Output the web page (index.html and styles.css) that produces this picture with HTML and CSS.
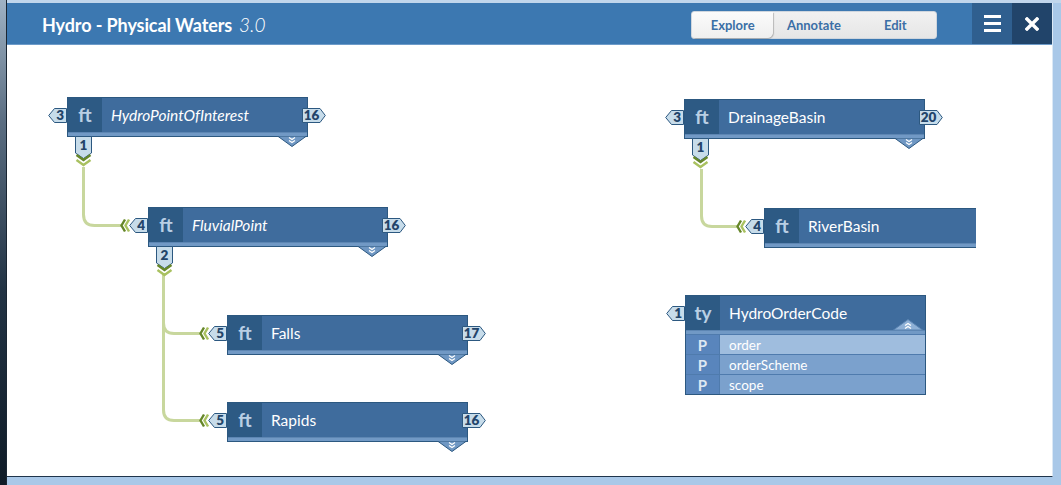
FILE: index.html
```html
<!DOCTYPE html>
<html>
<head>
<meta charset="utf-8">
<title>Hydro - Physical Waters</title>
<link rel="stylesheet" href="styles.css">
</head>
<body>
<div class="screen">
  <div class="frame-left"></div>
  <div class="window">
    <header class="titlebar">
      <div class="title"><span class="title-main">Hydro - Physical Waters</span><span class="title-ver">3.0</span></div>
      <div class="spacer"></div>
      <nav class="tabs">
        <span class="tab active">Explore</span>
        <span class="tab">Annotate</span>
        <span class="tab">Edit</span>
      </nav>
      <button class="hbtn menu-btn" aria-label="menu"><span class="bars"><i></i><i></i><i></i></span></button>
      <button class="hbtn close-btn" aria-label="close">
        <svg width="14" height="14" viewBox="0 0 14 14"><path d="M2 2 L12 12 M12 2 L2 12" stroke="#fff" stroke-width="3.4" stroke-linecap="square"/></svg>
      </button>
    </header>

    <main class="canvas">
      <svg class="links" width="969" height="431" viewBox="0 0 969 431">
        <path d="M76.5 122 V169.5 Q76.5 180.5 87.5 180.5 H115"/>
        <path d="M156.5 228 V278 Q156.5 288.5 167 288.5 H194"/>
        <path d="M156.5 228 V365 Q156.5 375.5 167 375.5 H194"/>
        <path d="M694.5 124 V171 Q694.5 181.5 705 181.5 H732"/>
      </svg>

      <!-- HydroPointOfInterest -->
      <div class="node n-hpoi">
        <div class="head"><span class="kind">ft</span><span class="name it">HydroPointOfInterest</span></div>
        <div class="strip"></div>
        <div class="port port-in"><svg viewBox="0 0 19 15"><polygon points="0.7,7.5 6.5,0.5 18.5,0.5 18.5,14.5 6.5,14.5"/></svg><span>3</span></div>
        <div class="port port-out"><svg viewBox="0 0 24 15"><polygon points="0.5,0.5 18,0.5 23.3,7.5 18,14.5 0.5,14.5"/></svg><span>16</span></div>
        <div class="port port-down"><svg viewBox="0 0 17 31"><polygon points="0.5,0.5 16.5,0.5 16.5,17 8.5,22.5 0.5,17"/><polyline class="chev-d" points="1.5,19 8.5,24 15.5,19"/><polyline class="chev-l" points="1.5,24 8.5,29 15.5,24"/></svg><span>1</span></div>
        <svg class="expand" viewBox="0 0 30 11"><polygon points="0.5,0 29.5,0 15,10.5"/><polyline points="12,1.5 15,3.5 18,1.5"/><polyline points="12,4.5 15,6.5 18,4.5"/></svg>
      </div>

      <!-- FluvialPoint -->
      <div class="node n-fluvial">
        <div class="head"><span class="kind">ft</span><span class="name it">FluvialPoint</span></div>
        <div class="strip"></div>
        <svg class="chevs" viewBox="0 0 10 15"><polyline class="chev-d" points="5,1.5 1.5,7.5 5,13.5"/><polyline class="chev-l" points="9,1.5 5.5,7.5 9,13.5"/></svg>
        <div class="port port-in"><svg viewBox="0 0 19 15"><polygon points="0.7,7.5 6.5,0.5 18.5,0.5 18.5,14.5 6.5,14.5"/></svg><span>4</span></div>
        <div class="port port-out"><svg viewBox="0 0 24 15"><polygon points="0.5,0.5 18,0.5 23.3,7.5 18,14.5 0.5,14.5"/></svg><span>16</span></div>
        <div class="port port-down"><svg viewBox="0 0 17 31"><polygon points="0.5,0.5 16.5,0.5 16.5,17 8.5,22.5 0.5,17"/><polyline class="chev-d" points="1.5,19 8.5,24 15.5,19"/><polyline class="chev-l" points="1.5,24 8.5,29 15.5,24"/></svg><span>2</span></div>
        <svg class="expand" viewBox="0 0 30 11"><polygon points="0.5,0 29.5,0 15,10.5"/><polyline points="12,1.5 15,3.5 18,1.5"/><polyline points="12,4.5 15,6.5 18,4.5"/></svg>
      </div>

      <!-- Falls -->
      <div class="node n-falls">
        <div class="head"><span class="kind">ft</span><span class="name">Falls</span></div>
        <div class="strip"></div>
        <svg class="chevs" viewBox="0 0 10 15"><polyline class="chev-d" points="5,1.5 1.5,7.5 5,13.5"/><polyline class="chev-l" points="9,1.5 5.5,7.5 9,13.5"/></svg>
        <div class="port port-in"><svg viewBox="0 0 19 15"><polygon points="0.7,7.5 6.5,0.5 18.5,0.5 18.5,14.5 6.5,14.5"/></svg><span>5</span></div>
        <div class="port port-out"><svg viewBox="0 0 24 15"><polygon points="0.5,0.5 18,0.5 23.3,7.5 18,14.5 0.5,14.5"/></svg><span>17</span></div>
        <svg class="expand" viewBox="0 0 30 11"><polygon points="0.5,0 29.5,0 15,10.5"/><polyline points="12,1.5 15,3.5 18,1.5"/><polyline points="12,4.5 15,6.5 18,4.5"/></svg>
      </div>

      <!-- Rapids -->
      <div class="node n-rapids">
        <div class="head"><span class="kind">ft</span><span class="name">Rapids</span></div>
        <div class="strip"></div>
        <svg class="chevs" viewBox="0 0 10 15"><polyline class="chev-d" points="5,1.5 1.5,7.5 5,13.5"/><polyline class="chev-l" points="9,1.5 5.5,7.5 9,13.5"/></svg>
        <div class="port port-in"><svg viewBox="0 0 19 15"><polygon points="0.7,7.5 6.5,0.5 18.5,0.5 18.5,14.5 6.5,14.5"/></svg><span>5</span></div>
        <div class="port port-out"><svg viewBox="0 0 24 15"><polygon points="0.5,0.5 18,0.5 23.3,7.5 18,14.5 0.5,14.5"/></svg><span>16</span></div>
        <svg class="expand" viewBox="0 0 30 11"><polygon points="0.5,0 29.5,0 15,10.5"/><polyline points="12,1.5 15,3.5 18,1.5"/><polyline points="12,4.5 15,6.5 18,4.5"/></svg>
      </div>

      <!-- DrainageBasin -->
      <div class="node n-drainage">
        <div class="head"><span class="kind">ft</span><span class="name">DrainageBasin</span></div>
        <div class="strip"></div>
        <div class="port port-in"><svg viewBox="0 0 19 15"><polygon points="0.7,7.5 6.5,0.5 18.5,0.5 18.5,14.5 6.5,14.5"/></svg><span>3</span></div>
        <div class="port port-out"><svg viewBox="0 0 24 15"><polygon points="0.5,0.5 18,0.5 23.3,7.5 18,14.5 0.5,14.5"/></svg><span>20</span></div>
        <div class="port port-down"><svg viewBox="0 0 17 31"><polygon points="0.5,0.5 16.5,0.5 16.5,17 8.5,22.5 0.5,17"/><polyline class="chev-d" points="1.5,19 8.5,24 15.5,19"/><polyline class="chev-l" points="1.5,24 8.5,29 15.5,24"/></svg><span>1</span></div>
        <svg class="expand" viewBox="0 0 30 11"><polygon points="0.5,0 29.5,0 15,10.5"/><polyline points="12,1.5 15,3.5 18,1.5"/><polyline points="12,4.5 15,6.5 18,4.5"/></svg>
      </div>

      <!-- RiverBasin -->
      <div class="node n-river">
        <div class="head"><span class="kind">ft</span><span class="name">RiverBasin</span></div>
        <div class="strip"></div>
        <svg class="chevs" viewBox="0 0 10 15"><polyline class="chev-d" points="5,1.5 1.5,7.5 5,13.5"/><polyline class="chev-l" points="9,1.5 5.5,7.5 9,13.5"/></svg>
        <div class="port port-in"><svg viewBox="0 0 19 15"><polygon points="0.7,7.5 6.5,0.5 18.5,0.5 18.5,14.5 6.5,14.5"/></svg><span>4</span></div>
      </div>

      <!-- HydroOrderCode -->
      <div class="node n-order">
        <div class="head"><span class="kind">ty</span><span class="name">HydroOrderCode</span></div>
        <svg class="collapse" viewBox="0 0 30 11"><polygon points="0.5,11 29.5,11 15,0.5"/><polyline points="12,6.5 15,4.5 18,6.5"/><polyline points="12,9.5 15,7.5 18,9.5"/></svg>
        <div class="strip"></div>
        <div class="row hl"><span class="p">P</span><span class="rname">order</span></div>
        <div class="row"><span class="p">P</span><span class="rname">orderScheme</span></div>
        <div class="row"><span class="p">P</span><span class="rname">scope</span></div>
        <div class="port port-in"><svg viewBox="0 0 19 15"><polygon points="0.7,7.5 6.5,0.5 18.5,0.5 18.5,14.5 6.5,14.5"/></svg><span>1</span></div>
      </div>
    </main>
  </div>
</div>
</body>
</html>
```

FILE: styles.css
```css
* { box-sizing: border-box; }

html, body {
  margin: 0;
  padding: 0;
}

body {
  font-family: Lato, "Open Sans", "DejaVu Sans", sans-serif;
  background: #a9c8e8;
}

.screen {
  display: flex;
  width: 1061px;
  height: 485px;
  background: linear-gradient(to bottom, #c1d6ec 0, #c1d6ec 3px, #a9c8e8 3px);
  overflow: hidden;
}

.frame-left {
  width: 7px;
  flex: none;
  background: linear-gradient(to bottom, #9fb2c4 0%, #5b6e82 25%, #223344 60%, #0f1b27 100%);
  border-right: 1px solid #1a2633;
}

.window {
  flex: 1;
  display: flex;
  flex-direction: column;
  margin: 3px 8px 8px 0;
  background: #fff;
  border-right: 1px solid #dbe8f5;
  border-bottom: 1px solid #1f344b;
  min-width: 0;
}

/* ---------- title bar ---------- */
.titlebar {
  display: flex;
  align-items: stretch;
  height: 42px;
  flex: none;
  background: #3c78b1;
  border-bottom: 1px solid #6d9bc9;
}

.title {
  display: flex;
  align-items: baseline;
  gap: 7px;
  padding-left: 35px;
  padding-top: 10px;
  color: #fff;
}

.title-main {
  font-weight: 700;
  font-size: 18px;
  letter-spacing: -0.1px;
}

.title-ver {
  font-style: italic;
  font-weight: 300;
  font-size: 19px;
  color: #ffffff;
}

.spacer { flex: 1; }

.tabs {
  display: flex;
  align-self: flex-start;
  margin-top: 8px;
  margin-right: 35px;
  height: 28px;
  width: 246px;
  background: linear-gradient(#f1f1f1, #e6e6e6);
  border: 1px solid #cfd6de;
  border-radius: 3px;
}

.tab {
  flex: 1;
  display: flex;
  align-items: center;
  justify-content: center;
  font-weight: 700;
  font-size: 13px;
  color: #3b6fa6;
}

.tab.active {
  background: linear-gradient(#fbfbfb, #efefef);
  border-radius: 3px 0 6px 3px;
  box-shadow: 1px 1px 1px rgba(0, 0, 0, 0.22);
}

.hbtn {
  width: 40px;
  border: 0;
  padding: 0;
  margin: 0;
  display: flex;
  align-items: center;
  justify-content: center;
  cursor: pointer;
}

.menu-btn { background: #2f5f8f; }
.close-btn { background: #21446a; }

.bars {
  display: flex;
  flex-direction: column;
  gap: 4px;
}

.bars i {
  display: block;
  width: 17px;
  height: 3px;
  background: #fff;
}

/* ---------- canvas ---------- */
.canvas {
  position: relative;
  flex: 1;
  width: 969px;
  overflow: hidden;
}

.links {
  position: absolute;
  left: 0;
  top: 0;
}

.links path {
  fill: none;
  stroke: #c8d79d;
  stroke-width: 3;
}

.node {
  position: absolute;
  width: 241px;
  border: 1px solid #2c5880;
  background: #3f6c9d;
}

.n-hpoi    { left: 60px;  top: 52px; }
.n-fluvial { left: 141px; top: 162px; width: 240px; }
.n-falls   { left: 220px; top: 270px; }
.n-rapids  { left: 220px; top: 357px; }
.n-drainage{ left: 677px; top: 54px; }
.n-river   { left: 757px; top: 163px; }
.n-order   { left: 678px; top: 250px; }

.head {
  display: flex;
  align-items: stretch;
  height: 34px;
}

.kind {
  width: 34px;
  flex: none;
  display: flex;
  align-items: center;
  justify-content: center;
  background: #2d5a84;
  color: #b9cfe4;
  font-weight: 700;
  font-size: 19px;
  padding-bottom: 1px;
}

.name {
  display: flex;
  align-items: center;
  padding-left: 9px;
  color: #fff;
  font-size: 15.5px;
  padding-bottom: 1px;
}

.name.it { font-style: italic; }

.strip {
  height: 4px;
  background: #7199c5;
  border-top: 1px solid #5d86b3;
}

/* ports */
.port {
  position: absolute;
  display: grid;
}

.port > * { grid-area: 1 / 1; }

.port svg {
  width: 100%;
  height: 100%;
  display: block;
}

.port polygon {
  fill: #c7dcea;
  stroke: #2c5880;
  stroke-width: 1;
}

.port span {
  font-weight: 800;
  font-size: 13.5px;
  color: #23456a;
  line-height: 15px;
}

.port-in {
  left: -20px;
  top: 10px;
  width: 19px;
  height: 15px;
}

.port-in span {
  justify-self: end;
  padding-right: 3px;
}

.port-out {
  left: 234px;
  top: 10px;
  width: 24px;
  height: 15px;
}

.n-fluvial .port-out { left: 233px; }

.port-out span {
  justify-self: start;
  width: 19px;
  text-align: center;
}

.port-down {
  left: 7px;
  top: 38px;
  width: 17px;
  height: 31px;
}

.port-down span {
  align-self: start;
  justify-self: center;
  padding-top: 2px;
}

.chev-d, .chev-l {
  fill: none;
  stroke-width: 2.4;
}

.chev-d { stroke: #66872a; }
.chev-l { stroke: #a9c160; }

.chevs {
  position: absolute;
  left: -29px;
  top: 10px;
  width: 10px;
  height: 15px;
}

.expand, .collapse {
  position: absolute;
  width: 30px;
  height: 11px;
}

.expand {
  left: 209px;
  top: 38px;
}

.n-fluvial .expand { left: 208px; }

.expand polygon {
  fill: #6f97c3;
  stroke: #2c5880;
  stroke-width: 1;
}

.expand polyline, .collapse polyline {
  fill: none;
  stroke: #fff;
  stroke-width: 1.3;
}

.collapse {
  left: 207px;
  top: 23px;
}

.collapse polygon {
  fill: #8eb0d6;
  stroke: #5a84b2;
  stroke-width: 1;
}

/* attribute rows */
.row {
  display: flex;
  height: 20px;
  border-top: 1px solid #4f7bad;
}

.row .p {
  width: 33px;
  flex: none;
  display: flex;
  align-items: center;
  justify-content: center;
  background: #5985bc;
  color: #dfe8f2;
  font-weight: 700;
  font-size: 15px;
}

.row .rname {
  flex: 1;
  display: flex;
  align-items: center;
  padding-left: 9px;
  background: #7ba1cd;
  color: #fff;
  font-size: 13.5px;
  border-left: 1px solid #4f7bad;
}

.row.hl .rname { background: #9fbdde; }
```
